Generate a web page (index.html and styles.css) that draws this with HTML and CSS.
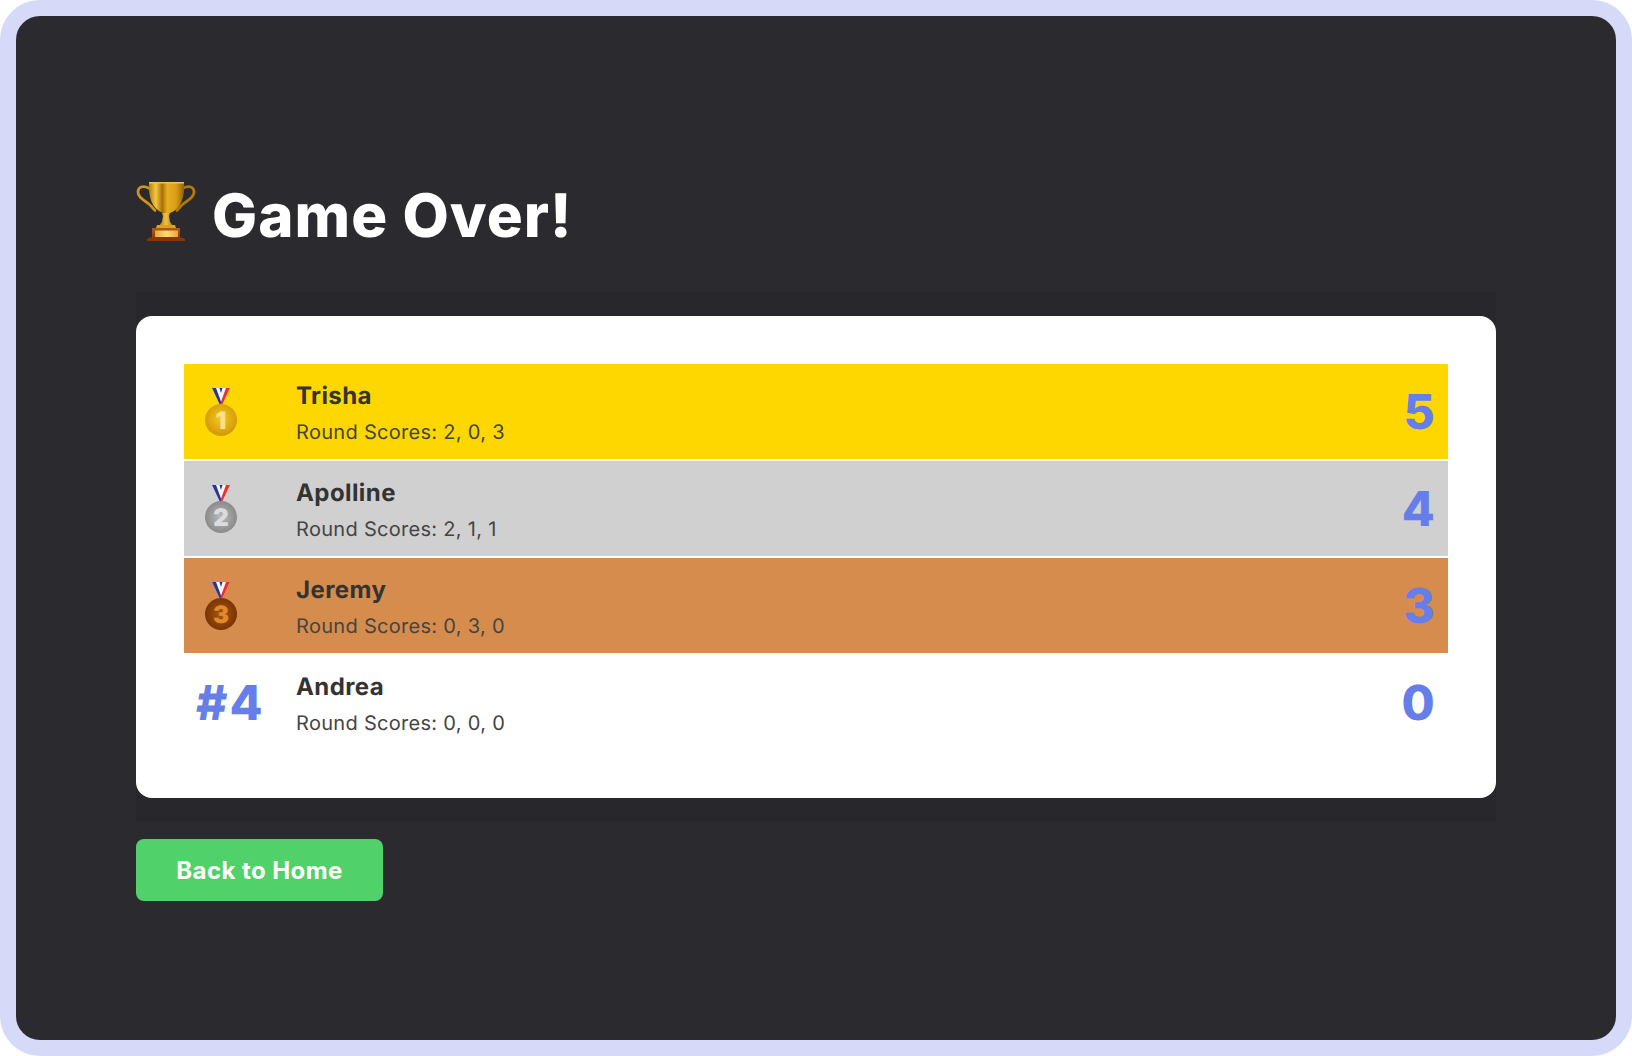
FILE: index.html
```html
<!DOCTYPE html>
<html lang="en">
<head>
<meta charset="utf-8">
<title>Game Over!</title>
<link rel="stylesheet" href="styles.css">
</head>
<body>
<svg class="defs" width="0" height="0" aria-hidden="true">
  <defs>
    <linearGradient id="cup" x1="0" y1="0" x2="1" y2="0">
      <stop offset="0" stop-color="#b57f0c"/>
      <stop offset=".2" stop-color="#f3c63f"/>
      <stop offset=".38" stop-color="#a96f06"/>
      <stop offset=".52" stop-color="#e6ae20"/>
      <stop offset=".78" stop-color="#d79c16"/>
      <stop offset="1" stop-color="#94600a"/>
    </linearGradient>
    <linearGradient id="stem" x1="0" y1="0" x2="1" y2="0">
      <stop offset="0" stop-color="#a56d08"/>
      <stop offset=".5" stop-color="#f1c445"/>
      <stop offset="1" stop-color="#a56d08"/>
    </linearGradient>
    <linearGradient id="wood" x1="0" y1="0" x2="0" y2="1">
      <stop offset="0" stop-color="#b5590f"/>
      <stop offset="1" stop-color="#8a3a06"/>
    </linearGradient>
    <linearGradient id="plate" x1="0" y1="0" x2="1" y2="0">
      <stop offset="0" stop-color="#e6a92f"/>
      <stop offset=".5" stop-color="#fbdc78"/>
      <stop offset="1" stop-color="#e6a92f"/>
    </linearGradient>
    <radialGradient id="gold" cx=".5" cy=".45" r=".6">
      <stop offset="0" stop-color="#f6c81a"/>
      <stop offset="1" stop-color="#cf9408"/>
    </radialGradient>
    <radialGradient id="silver" cx=".5" cy=".5" r=".6">
      <stop offset="0" stop-color="#bcbcbc"/>
      <stop offset="1" stop-color="#808080"/>
    </radialGradient>
    <radialGradient id="bronze" cx=".5" cy=".5" r=".55">
      <stop offset="0" stop-color="#ab560f"/>
      <stop offset="1" stop-color="#743103"/>
    </radialGradient>
    <g id="ribbon">
      <path d="M15 0h18l-8 17h-2z" fill="#f6f6f6"/>
      <path d="M15 0h4l5.500 15-1.500 2z" fill="#27349c"/>
      <path d="M33 0h-4l-5.500 15 1.500 2z" fill="#e9322d"/>
      <path d="M22.500 0h3l-1.500 5z" fill="#27349c"/>
    </g>
  </defs>
</svg>
<div class="frame">
  <h1 class="title">
    <svg class="trophy" viewBox="0 0 60 60" width="60" height="60" role="img" aria-label="Trophy">
      <path d="M14 7C9 3 2 4 2 10c0 7 9 9 13 14 2 2 3 4 5 5" fill="none" stroke="#cf9418" stroke-width="2.800"/>
      <path d="M46 7c5-4 12-3 12 3 0 7-9 9-13 14-2 2-3 4-5 5" fill="none" stroke="#b27a0e" stroke-width="2.800"/>
      <path d="M13 0h35c1 15-3 27-14 31h-7C16 27 12 15 13 0z" fill="url(#cup)"/>
      <path d="M13 0h35v1.500H13z" fill="#eec258"/>
      <path d="M26 31h8l-1 3 1 6 4 5H22l4-5 1-6z" fill="url(#stem)"/>
      <path d="M21 43h18l1 3H20z" fill="#dca223"/>
      <path d="M16 46h28v10H16z" fill="url(#wood)"/>
      <path d="M19 48.500h23v6.500H19z" fill="url(#plate)"/>
      <path d="M14 55.500h32l3 1.500v2H11v-2z" fill="#873706"/>
    </svg>
    <span class="title-text">Game Over!</span>
  </h1>
  <section class="panel">
    <div class="card">
      <div class="row row-gold">
        <div class="rank">
          <svg class="medal" viewBox="0 0 48 48" width="48" height="48" role="img" aria-label="1st place">
            <use href="#ribbon"/>
            <circle cx="24" cy="32" r="16" fill="url(#gold)"/>
            <text class="digit digit-gold" x="24" y="40.500" text-anchor="middle">1</text>
          </svg>
        </div>
        <div class="player">
          <div class="name">Trisha</div>
          <div class="rounds">Round Scores: 2, 0, 3</div>
        </div>
        <div class="score">5</div>
      </div>
      <div class="row row-silver">
        <div class="rank">
          <svg class="medal" viewBox="0 0 48 48" width="48" height="48" role="img" aria-label="2nd place">
            <use href="#ribbon"/>
            <circle cx="24" cy="32" r="16" fill="url(#silver)"/>
            <text class="digit digit-silver" x="24" y="40.500" text-anchor="middle">2</text>
          </svg>
        </div>
        <div class="player">
          <div class="name">Apolline</div>
          <div class="rounds">Round Scores: 2, 1, 1</div>
        </div>
        <div class="score">4</div>
      </div>
      <div class="row row-bronze">
        <div class="rank">
          <svg class="medal" viewBox="0 0 48 48" width="48" height="48" role="img" aria-label="3rd place">
            <use href="#ribbon"/>
            <circle cx="24" cy="32" r="16" fill="url(#bronze)"/>
            <text class="digit digit-bronze" x="24" y="40.500" text-anchor="middle">3</text>
          </svg>
        </div>
        <div class="player">
          <div class="name">Jeremy</div>
          <div class="rounds">Round Scores: 0, 3, 0</div>
        </div>
        <div class="score">3</div>
      </div>
      <div class="row row-plain">
        <div class="rank rank-text">#4</div>
        <div class="player">
          <div class="name">Andrea</div>
          <div class="rounds">Round Scores: 0, 0, 0</div>
        </div>
        <div class="score">0</div>
      </div>
    </div>
  </section>
  <button class="home" type="button">Back to Home</button>
</div>
</body>
</html>
```

FILE: styles.css
```css
* { box-sizing: border-box; }
html, body { margin: 0; height: 100%; background: #fff; }
body {
  font-family: Inter, "Liberation Sans", sans-serif;
  text-rendering: geometricPrecision;
}
.defs { position: absolute; }
.frame {
  height: 1056px;
  border: 16px solid #d6d9f7;
  border-radius: 40px;
  background: #2a2a2f;
  padding: 163px 120px 0;
  display: flex;
  flex-direction: column;
  align-items: flex-start;
}
.title {
  margin: 0 0 41px;
  display: flex;
  align-items: center;
  gap: 16px;
  height: 72px;
  font-size: 60px;
  line-height: 72px;
  font-weight: 800;
  letter-spacing: 1.04px;
  color: #fff;
}
.title-text { padding-top: 2px; }
.trophy { display: block; flex: none; align-self: flex-start; margin-top: 3px; }
.panel {
  width: 100%;
  padding: 24px 0;
  background: #28282c;
}
.card {
  background: #fff;
  border-radius: 16px;
  padding: 48px;
}
.row {
  display: flex;
  align-items: center;
  height: 97px;
  padding-right: 12px;
  border-bottom: 2px solid #fff;
  color: #333;
}
.row-gold { background: #ffd700; }
.row-silver { background: #d0d0d0; }
.row-bronze { background: #d68c4c; }
.row-plain { background: #fff; height: 95px; border-bottom: 0; }
.rank {
  width: 112px;
  flex: none;
  padding-left: 13px;
}
.rank-text {
  font-size: 48px;
  font-weight: 800;
  letter-spacing: 2px;
  color: #667eea;
  padding-left: 12px;
}
.medal { display: block; }
.digit { font-family: Inter, "Liberation Sans", sans-serif; font-size: 24px; font-weight: 900; }
.digit-gold { fill: #fbe08a; }
.digit-silver { fill: #dcdcdc; }
.digit-bronze { fill: #e08a2a; }
.player { flex: 1; min-width: 0; padding-top: 1px; }
.name {
  font-size: 24px;
  line-height: 29px;
  font-weight: 700;
  letter-spacing: 0.42px;
  color: #333;
  margin-bottom: 10px;
}
.rounds {
  font-size: 20px;
  line-height: 24px;
  letter-spacing: 0.3px;
  color: #444;
}
.score {
  font-size: 48px;
  line-height: 58px;
  font-weight: 800;
  letter-spacing: 1.2px;
  color: #667eea;
}
.home {
  margin-top: 17px;
  width: 247px;
  height: 62px;
  border: 0;
  border-radius: 8px;
  background: #51d16a;
  color: #fff;
  font-family: inherit;
  font-size: 24px;
  font-weight: 700;
  letter-spacing: 0.43px;
}
```
